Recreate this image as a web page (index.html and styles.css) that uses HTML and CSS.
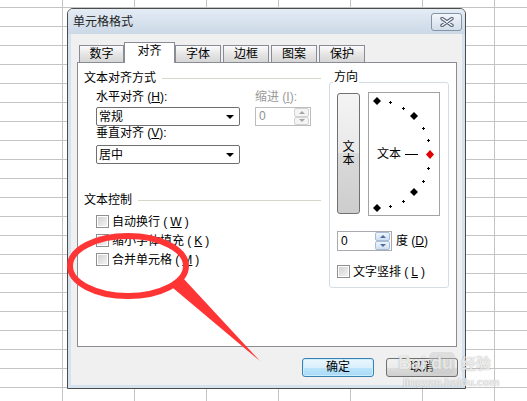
FILE: index.html
```html
<!DOCTYPE html>
<html lang="zh-CN">
<head>
    <meta charset="UTF-8">
    <meta name="viewport" content="width=device-width, initial-scale=1.0">
    <title>单元格格式</title>
    <link rel="stylesheet" href="styles.css">
</head>
<body>
    <div class="dialog">
        <div class="titlebar">
            <span class="title">单元格格式</span>
            <button class="close-btn">
                <svg width="14" height="10" viewBox="0 0 14 10">
                    <path d="M2 1.5 L12 8.5 M12 1.5 L2 8.5" stroke="#56627a" stroke-width="3.4" stroke-linecap="round" fill="none"/>
                    <path d="M2 1.5 L12 8.5 M12 1.5 L2 8.5" stroke="#ffffff" stroke-width="1.3" stroke-linecap="round" fill="none"/>
                </svg>
            </button>
        </div>

        <div class="client">
            <div class="tabs">
                <div class="tab first">数字</div>
                <div class="tab active">对齐</div>
                <div class="tab after-active">字体</div>
                <div class="tab">边框</div>
                <div class="tab">图案</div>
                <div class="tab">保护</div>
            </div>

            <div class="panel">
                <div class="left-col">
                    <div class="group-title">文本对齐方式</div>
                    <div class="align-rows">
                        <div class="align-main">
                            <div class="field-label">水平对齐 (<u>H</u>):</div>
                            <div class="combo"><span>常规</span><i class="arrow"></i></div>
                            <div class="field-label">垂直对齐 (<u>V</u>):</div>
                            <div class="combo second"><span>居中</span><i class="arrow"></i></div>
                        </div>
                        <div class="indent">
                            <div class="field-label disabled">缩进 (<u>I</u>):</div>
                            <div class="spin disabled">
                                <span class="value">0</span>
                                <div class="spin-btns">
                                    <span><i class="up"></i></span>
                                    <span><i class="down"></i></span>
                                </div>
                            </div>
                        </div>
                    </div>

                    <div class="group-title control">文本控制</div>
                    <div class="checks">
                        <div class="check"><span class="box"></span>自动换行 (<u>W</u>)</div>
                        <div class="check"><span class="box"></span>缩小字体填充 (<u>K</u>)</div>
                        <div class="check"><span class="box"></span>合并单元格 (<u>M</u>)</div>
                    </div>
                </div>

                <div class="orient">
                    <div class="legend">方向</div>
                    <div class="orient-top">
                        <div class="vtext-btn"><span>文</span><span>本</span></div>
                        <div class="dial">
                            <svg width="70" height="122" viewBox="0 0 70 122">
                                <g fill="#000">
                                    <path d="M8 4 L12 8 L8 12 L4 8 Z"/>
                                    <path d="M45 19 L49 23 L45 27 L41 23 Z"/>
                                    <path d="M45 95 L49 99 L45 103 L41 99 Z"/>
                                    <path d="M8 111 L12 115 L8 119 L4 115 Z"/>
                                    <rect x="20" y="9" width="3" height="1"/><rect x="21" y="8" width="1" height="3"/>
                                    <rect x="33" y="15" width="3" height="1"/><rect x="34" y="14" width="1" height="3"/>
                                    <rect x="53" y="35" width="3" height="1"/><rect x="54" y="34" width="1" height="3"/>
                                    <rect x="58" y="47" width="3" height="1"/><rect x="59" y="46" width="1" height="3"/>
                                    <rect x="58" y="75" width="3" height="1"/><rect x="59" y="74" width="1" height="3"/>
                                    <rect x="53" y="88" width="3" height="1"/><rect x="54" y="87" width="1" height="3"/>
                                    <rect x="33" y="108" width="3" height="1"/><rect x="34" y="107" width="1" height="3"/>
                                    <rect x="20" y="113" width="3" height="1"/><rect x="21" y="112" width="1" height="3"/>
                                    <rect x="36" y="61" width="13" height="1"/>
                                </g>
                                <path d="M61 57 L65 61.5 L61 66 L57 61.5 Z" fill="#e00000"/>
                            </svg>
                            <span class="dial-text">文本</span>
                        </div>
                    </div>
                    <div class="degree-row">
                        <div class="spin">
                            <span class="value">0</span>
                            <div class="spin-btns">
                                <span><i class="up"></i></span>
                                <span><i class="down"></i></span>
                            </div>
                        </div>
                        <span>度 (<u>D</u>)</span>
                    </div>
                    <div class="check"><span class="box"></span>文字竖排 (<u>L</u>)</div>
                </div>
            </div>

            <div class="buttons">
                <button class="btn default">确定</button>
                <button class="btn">取消</button>
            </div>
        </div>
    </div>

    <!-- red pen mark drawn over the screenshot -->
    <svg class="annotation" width="527" height="401" viewBox="0 0 527 401">
        <ellipse cx="128" cy="266" rx="58" ry="30" fill="none" stroke="#ff3535" stroke-width="6"/>
        <polygon points="173,288 183,278 260,361" fill="#ff3535"/>
    </svg>

    <div class="watermark">
        <div class="wm-logo">Bai<span class="wm-du">du</span><span class="wm-cn">经验</span></div>
        <div class="wm-url">jingyan.baidu.com</div>
    </div>
</body>
</html>
```

FILE: styles.css
```css
* {
    margin: 0;
    padding: 0;
    box-sizing: border-box;
}

body {
    width: 527px;
    height: 401px;
    overflow: hidden;
    position: relative;
    font-family: "Liberation Sans", "Noto Sans CJK SC", sans-serif;
    font-size: 12px;
    color: #000;
    background-color: #fff;
    background-image:
        linear-gradient(to right, #c4c4c4 1px, transparent 1px),
        linear-gradient(to bottom, #c4c4c4 1px, transparent 1px);
    background-size: 72px 19px;
    background-position: 62px 7px;
}

u {
    text-decoration: underline;
}

/* dialog frame */
.dialog {
    width: 399px;
    height: 381px;
    margin: 8px 0 0 67px;
    border: 1px solid #4b4b4b;
    border-radius: 6px 6px 0 0;
    background: #d6e2ee;
    display: flex;
    flex-direction: column;
}

.titlebar {
    height: 25px;
    display: flex;
    align-items: center;
    justify-content: space-between;
    padding: 0 3px 0 5px;
    border-radius: 5px 5px 0 0;
    background: linear-gradient(#e4ecf5, #cbd8e6);
}

.title {
    color: #222;
    line-height: 14px;
}

.close-btn {
    width: 31px;
    height: 18px;
    border: 1px solid #8393a8;
    border-radius: 3px;
    background: linear-gradient(#f3f6fa, #d3dde9);
    display: flex;
    align-items: center;
    justify-content: center;
}

.client {
    flex: 1;
    margin: 0 3px 3px;
    padding: 8px 5px 0 6px;
    background: #f0f0f0;
}

/* tabs */
.tabs {
    display: flex;
    align-items: flex-end;
    height: 20px;
    padding-left: 2px;
}

.tab {
    width: 46px;
    height: 17px;
    margin-left: 2px;
    border: 1px solid #898c95;
    border-bottom: none;
    background: linear-gradient(#fbfbfb, #e6e6e6 50%, #d6d6d6);
    text-align: center;
    line-height: 16px;
}

.tab.first {
    width: 45px;
    margin-left: 0;
}

.tab.active {
    width: 51px;
    height: 21px;
    margin-left: 0;
    margin-bottom: -1px;
    background: #fff;
    line-height: 17px;
    position: relative;
    z-index: 1;
}

.tab.after-active {
    margin-left: 0;
}

.panel {
    width: 380px;
    height: 285px;
    border: 1px solid #898c95;
    background: #fff;
    display: flex;
}

/* left column */
.left-col {
    width: 243px;
    padding: 8px 0 0 6px;
}

.group-title {
    display: flex;
    align-items: center;
    gap: 6px;
    line-height: 14px;
}

.group-title::after {
    content: "";
    flex: 1;
    height: 1px;
    background: #d8d6c9;
}

.group-title.control {
    margin-top: 29px;
}

.align-rows {
    display: flex;
    padding-left: 12px;
    margin-top: 5px;
}

.align-main {
    width: 144px;
}

.field-label {
    line-height: 14px;
}

.field-label.disabled {
    color: #9a9a9a;
}

.combo {
    height: 19px;
    margin-top: 3px;
    border: 1px solid #6f6f6f;
    border-radius: 2px;
    background: #fff;
    display: flex;
    align-items: center;
    justify-content: space-between;
    padding: 0 5px 0 2px;
    line-height: 14px;
}

.combo.second {
    margin-top: 5px;
}

.arrow {
    width: 0;
    height: 0;
    border-left: 4px solid transparent;
    border-right: 4px solid transparent;
    border-top: 4px solid #000;
}

.indent {
    margin-left: 15px;
}

/* spin boxes */
.spin {
    display: flex;
    width: 56px;
    height: 19px;
    margin-top: 3px;
    border: 1px solid #a7abb0;
    background: #fff;
}

.spin .value {
    flex: 1;
    padding-left: 3px;
    line-height: 17px;
}

.spin-btns {
    width: 15px;
    margin: 0 1px 0 0;
    display: flex;
    flex-direction: column;
}

.spin-btns span {
    flex: 1;
    border: 1px solid #a9bcd6;
    border-radius: 2px;
    background: linear-gradient(#eef4fb, #cfdff0);
    display: flex;
    align-items: center;
    justify-content: center;
}

.spin-btns .up {
    border-left: 3px solid transparent;
    border-right: 3px solid transparent;
    border-bottom: 3px solid #4d6e9c;
}

.spin-btns .down {
    border-left: 3px solid transparent;
    border-right: 3px solid transparent;
    border-top: 3px solid #4d6e9c;
}

.spin.disabled {
    border-color: #bdbdbd;
}

.spin.disabled .value {
    color: #8f8f8f;
}

.spin.disabled .spin-btns span {
    border-color: #d2d2d2;
    background: #f4f4f4;
}

.spin.disabled .up {
    border-bottom-color: #a5a5a5;
}

.spin.disabled .down {
    border-top-color: #a5a5a5;
}

/* check boxes */
.checks {
    padding-left: 12px;
    margin-top: 5px;
}

.check {
    display: flex;
    align-items: center;
    gap: 3px;
    height: 19px;
    line-height: 14px;
}

.box {
    width: 13px;
    height: 13px;
    border: 1px solid #8f8f8f;
    background: linear-gradient(135deg, #cfcfcf, #f6f6f6);
    box-shadow: inset 0 0 0 1px #fff;
}

/* orientation group */
.orient {
    width: 120px;
    height: 206px;
    margin: 19px 0 0 8px;
    padding-left: 7px;
    border: 1px solid #d3dde6;
    border-radius: 3px;
}

.legend {
    width: fit-content;
    margin: -13px 0 0 -4px;
    padding: 0 1px;
    background: #fff;
    line-height: 14px;
}

.orient-top {
    display: flex;
    align-items: flex-start;
    gap: 8px;
    margin-top: 8px;
}

.vtext-btn {
    width: 23px;
    height: 121px;
    margin-top: 1px;
    border: 1px solid #707070;
    border-radius: 3px;
    background: linear-gradient(#f4f4f4, #e8e8e8 50%, #dadada 50%, #cdcdcd);
    display: flex;
    flex-direction: column;
    align-items: center;
    justify-content: center;
}

.vtext-btn span {
    display: block;
    height: 13px;
    line-height: 13px;
}

.dial {
    width: 72px;
    height: 124px;
    border: 1px solid #a3a3a3;
    background: #fff;
    position: relative;
}

.dial svg {
    position: absolute;
    left: 0;
    top: 0;
}

.dial-text {
    position: absolute;
    left: 8px;
    top: 54px;
    line-height: 14px;
}

.degree-row {
    display: flex;
    align-items: center;
    gap: 4px;
    margin-top: 15px;
    line-height: 14px;
}

.degree-row .spin {
    width: 55px;
    height: 20px;
    margin-top: 0;
}

.degree-row .spin .value {
    line-height: 18px;
}

.orient .check {
    margin-top: 11px;
}

/* bottom buttons */
.buttons {
    display: flex;
    justify-content: flex-end;
    gap: 12px;
    margin: 11px -1px 0 0;
}

.btn {
    width: 72px;
    height: 19px;
    border: 1px solid #707070;
    border-radius: 3px;
    font: inherit;
    line-height: 17px;
    color: #000;
    background: linear-gradient(#f2f2f2, #ebebeb 50%, #dddddd 50%, #cfcfcf);
}

.btn.default {
    border-color: #3c7fb1;
    background: linear-gradient(#eaf6fd, #d9f0fc 50%, #bee6fd 50%, #a7d9f5);
    box-shadow: inset 0 0 0 1px #cbeefc;
}

/* overlays */
.annotation {
    position: absolute;
    left: 0;
    top: 0;
    pointer-events: none;
}

.watermark {
    position: absolute;
    left: 398px;
    top: 352px;
    color: rgba(255, 255, 255, 0.8);
    text-shadow: 0 0 1px rgba(110, 110, 110, 0.7);
    pointer-events: none;
}

.wm-logo {
    font-family: "Liberation Sans", sans-serif;
    font-weight: bold;
    font-size: 18px;
    line-height: 22px;
    display: flex;
    align-items: center;
}

.wm-du {
    margin-left: 3px;
    padding: 0 2px;
    border-radius: 5px;
    background: rgba(200, 200, 200, 0.45);
}

.wm-cn {
    margin-left: 6px;
    font-family: "Noto Sans CJK SC", sans-serif;
    font-size: 15px;
}

.wm-url {
    margin: 2px 0 0 5px;
    font-family: "Liberation Sans", sans-serif;
    font-size: 11px;
    line-height: 12px;
    font-weight: bold;
}
```
